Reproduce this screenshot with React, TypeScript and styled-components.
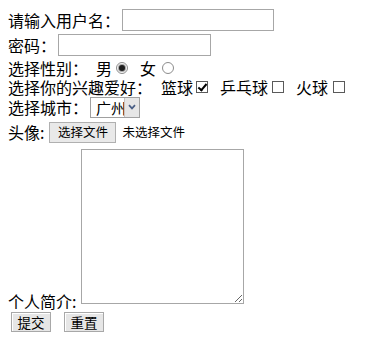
import React from "react";
import styled, { createGlobalStyle } from "styled-components";

const Global = createGlobalStyle`
  html, body { background: #fff; }
  body {
    margin: 8px;
    font-family: "Noto Sans CJK SC", "Liberation Sans", sans-serif;
    font-size: 16px;
    color: #000;
  }
  * { box-sizing: border-box; }
`;

const Form = styled.form`
  display: flex;
  flex-direction: column;
`;

const Row = styled.div<{ $h: number; $align?: string; $mt?: number }>`
  display: flex;
  align-items: ${(p) => p.$align || "center"};
  height: ${(p) => p.$h}px;
  margin-top: ${(p) => p.$mt || 0}px;
`;

const Label = styled.span<{ $ml?: number }>`
  white-space: nowrap;
  line-height: 16px;
  margin-left: ${(p) => p.$ml || 0}px;
`;

const TextInput = styled.input<{ $w: number }>`
  width: ${(p) => p.$w}px;
  height: 22px;
  margin: 0 0 0 2px;
  border: 1px solid #a7a7a7;
  background: #fff;
  padding: 1px 2px;
  font: inherit;
`;

const Radio = styled.input.attrs({ type: "radio" })<{ $ml: number }>`
  appearance: none;
  width: 12px;
  height: 12px;
  margin: 0 0 0 ${(p) => p.$ml}px;
  border: 1px solid #8c8c8c;
  border-radius: 50%;
  background: #fff;
  display: grid;
  place-items: center;
  &:checked::after {
    content: "";
    width: 6px;
    height: 6px;
    border-radius: 50%;
    background: #1e1e1e;
    box-shadow: 0 0 1px 1px #9a9a9a;
  }
`;

const Check = styled.input.attrs({ type: "checkbox" })<{ $ml: number }>`
  appearance: none;
  width: 12px;
  height: 12px;
  margin: 0 0 0 ${(p) => p.$ml}px;
  border: 1px solid #5a5a5a;
  background: #fff;
  position: relative;
  &:checked::after {
    content: "";
    position: absolute;
    left: 3px;
    top: 0px;
    width: 3px;
    height: 7px;
    border: solid #000;
    border-width: 0 2px 2px 0;
    transform: rotate(40deg);
  }
`;

const SelectBox = styled.div`
  display: flex;
  width: 50px;
  height: 21px;
  margin-left: 2px;
  border: 1px solid #a0a0a0;
  background: #fff;
`;

const SelectField = styled.select`
  appearance: none;
  border: none;
  outline: none;
  background: transparent;
  font: inherit;
  font-size: 15px;
  line-height: 17px;
  padding: 0 0 0 5px;
  width: 33px;
  color: #000;
`;

const ArrowBox = styled.span`
  flex: 1;
  display: grid;
  place-items: center;
  background: #e6e6e6;
  border-left: 1px solid #c4c4c4;
`;

const FileButton = styled.button`
  margin-left: 5px;
  width: 67px;
  height: 21px;
  padding: 0;
  font-family: inherit;
  font-size: 12.5px;
  line-height: 14px;
  background: #e9e9e9;
  border: 1px solid #b0b0b0;
  color: #000;
`;

const FileName = styled.span`
  margin-left: 6px;
  font-size: 12.5px;
  line-height: 14px;
`;

const TextArea = styled.textarea`
  width: 163px;
  height: 155px;
  margin: 0 0 5px 5px;
  border: 1px solid #a7a7a7;
  font: inherit;
`;

const ActionButton = styled.button<{ $ml: number }>`
  margin-left: ${(p) => p.$ml}px;
  width: 40px;
  height: 20px;
  padding: 0;
  font-family: inherit;
  font-size: 13.5px;
  line-height: 14px;
  background: #e6e6e6;
  border: 1px solid #a8a8a8;
  box-shadow: inset 1px 1px 0 #fff;
  color: #000;
`;

export default function App() {
  return (
    <>
      <Global />
      <Form onSubmit={(e) => e.preventDefault()}>
        <Row $h={23}>
          <Label>请输入用户名：</Label>
          <TextInput $w={152} />
        </Row>
        <Row $h={27}>
          <Label>密码：</Label>
          <TextInput $w={153} type="password" />
        </Row>
        <Row $h={20}>
          <Label>选择性别：</Label>
          <Label $ml={8}>男</Label>
          <Radio name="sex" defaultChecked $ml={4} />
          <Label $ml={12}>女</Label>
          <Radio name="sex" $ml={6} />
        </Row>
        <Row $h={18}>
          <Label>选择你的兴趣爱好：</Label>
          <Label $ml={9}>篮球</Label>
          <Check defaultChecked $ml={3} />
          <Label $ml={12}>乒乓球</Label>
          <Check $ml={4} />
          <Label $ml={12}>火球</Label>
          <Check $ml={5} />
        </Row>
        <Row $h={22}>
          <Label>选择城市：</Label>
          <SelectBox>
            <SelectField defaultValue="gz">
              <option value="gz">广州</option>
              <option value="bj">北京</option>
              <option value="sh">上海</option>
            </SelectField>
            <ArrowBox>
              <svg width="8" height="6" viewBox="0 0 8 6">
                <path d="M1 1.2 L4 4.4 L7 1.2" fill="none" stroke="#4a5f86" strokeWidth="1.7" />
              </svg>
            </ArrowBox>
          </SelectBox>
        </Row>
        <Row $h={28}>
          <Label>头像:</Label>
          <FileButton type="button">选择文件</FileButton>
          <FileName>未选择文件</FileName>
        </Row>
        <Row $h={163} $align="flex-end">
          <Label>个人简介:</Label>
          <TextArea />
        </Row>
        <Row $h={20} $mt={3}>
          <ActionButton type="submit" $ml={3}>提交</ActionButton>
          <ActionButton type="reset" $ml={13}>重置</ActionButton>
        </Row>
      </Form>
    </>
  );
}
